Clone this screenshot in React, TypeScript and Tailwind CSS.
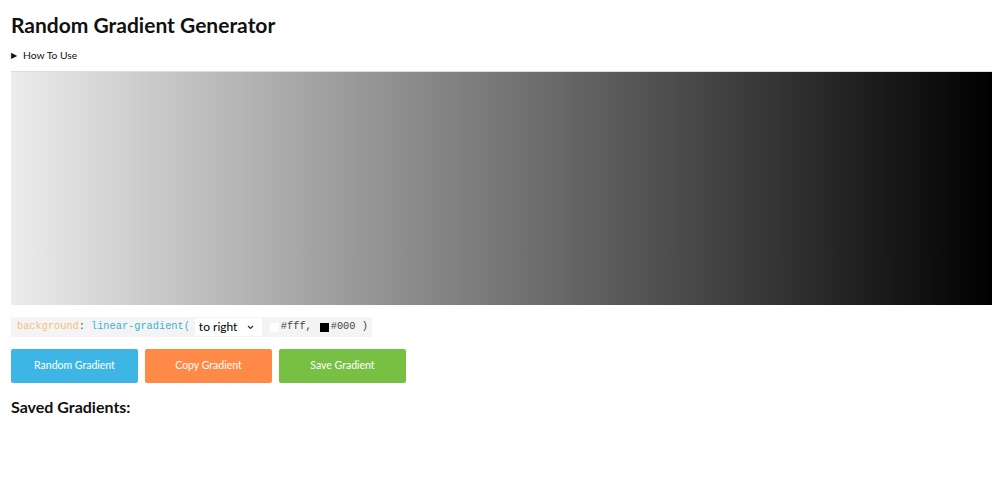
import { useState } from 'react'

const buttons = [
  { label: 'Random Gradient', className: 'bg-[#3db6e5]' },
  { label: 'Copy Gradient', className: 'bg-[#ff8a48]' },
  { label: 'Save Gradient', className: 'bg-[#78c043]' },
]

export default function App() {
  const [direction, setDirection] = useState('to right')

  return (
    <div className="min-h-screen w-full bg-white px-[11px] pt-[10px] font-['Lato','Noto_Sans',sans-serif] text-[#111]">
      <h1 className="text-[21px] font-bold leading-[30px]">Random Gradient Generator</h1>

      {/* collapsed how-to details */}
      <div className="mt-[8px] flex items-center gap-[6px] text-[10.3px] leading-[14px]">
        <span className="text-[8px]">&#9654;</span>
        <span>How To Use</span>
      </div>

      {/* gradient preview */}
      <div className="mt-[9px] h-[234px] w-[981px] border-t border-[#ddd] bg-[linear-gradient(to_right,#ececec,#000)]" />

      {/* css output line */}
      <div className="mt-[12px] flex h-[20px] w-[361px] items-center whitespace-nowrap bg-[#f4f4f4] pl-[6px] font-['Liberation_Mono',monospace] text-[10.3px]">
        <span className="text-[#f5c17c]">background</span>
        <span className="text-[#555]">:</span>
        <span className="ml-[6px] text-[#39b3d6]">linear-gradient(</span>
        <div className="relative ml-[5px] shrink-0">
          <select
            value={direction}
            onChange={(e) => setDirection(e.target.value)}
            className="h-[18px] w-[67px] appearance-none bg-white pl-[4px] font-['Lato',sans-serif] text-[12px] text-black outline-none"
          >
            <option>to right</option>
            <option>to left</option>
            <option>to bottom</option>
            <option>to top</option>
          </select>
          <svg className="pointer-events-none absolute right-[8px] top-[7px]" width="7" height="5" viewBox="0 0 7 5">
            <path d="M1 1l2.5 2.5L6 1" fill="none" stroke="#333" strokeWidth="1.2" />
          </svg>
        </div>
        <span className="ml-[8px] inline-block h-[9px] w-[9px] shrink-0 bg-white" />
        <span className="ml-[2px] text-[#444]">#fff,</span>
        <span className="ml-[8px] inline-block h-[9px] w-[9px] shrink-0 bg-black" />
        <span className="ml-[2px] text-[#444]">#000 )</span>
      </div>

      <div className="mt-[12px] flex gap-[7px]">
        {buttons.map((b) => (
          <button
            key={b.label}
            className={`h-[34px] w-[127px] rounded-[2px] text-[10.5px] text-white ${b.className}`}
          >
            {b.label}
          </button>
        ))}
      </div>

      <h2 className="mt-[13px] text-[16px] font-bold leading-[22px]">Saved Gradients:</h2>
    </div>
  )
}
